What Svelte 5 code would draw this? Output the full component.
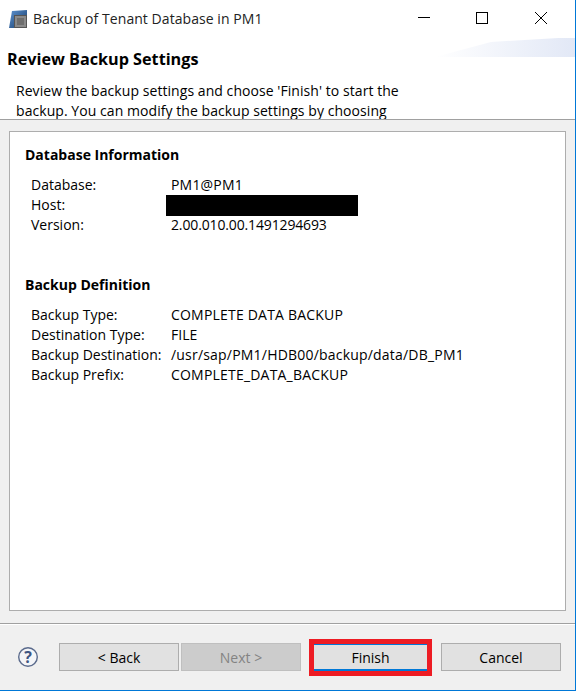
<script>
  const info = [
    { k: "Database:", v: "PM1@PM1", c: "wide" },
    { k: "Host:", v: "", c: "" },
    { k: "Version:", v: "2.00.010.00.1491294693", c: "narrow" }
  ];
  const def = [
    { k: "Backup Type:", v: "COMPLETE DATA BACKUP", c: "wide" },
    { k: "Destination Type:", v: "FILE", c: "" },
    { k: "Backup Destination:", v: "/usr/sap/PM1/HDB00/backup/data/DB_PM1", c: "wide" },
    { k: "Backup Prefix:", v: "COMPLETE_DATA_BACKUP", c: "wide" }
  ];
</script>

<div class="window">
  <header class="titlebar">
    <svg class="appicon" width="18" height="18" viewBox="0 0 18 18">
      <defs>
        <linearGradient id="ib" x1="0" y1="0" x2="1" y2="1">
          <stop offset="0" stop-color="#5f93cf" />
          <stop offset="1" stop-color="#123a6b" />
        </linearGradient>
      </defs>
      <path d="M0 18 L3 1 L18 0 L18 18 Z" fill="url(#ib)" />
      <rect x="5.5" y="5.5" width="12" height="12" fill="#8a8a8a" stroke="#555" />
      <rect x="8" y="8" width="7" height="7" fill="#6e6e6e" />
    </svg>
    <span class="title">Backup of Tenant Database in PM1</span>
    <div class="controls">
      <svg width="14" height="14" viewBox="0 0 14 14"><path d="M1 6.5H13" stroke="#000" fill="none" /></svg>
      <svg width="14" height="14" viewBox="0 0 14 14"><rect x="1.5" y="1.5" width="11" height="11" stroke="#000" fill="none" /></svg>
      <svg class="close" width="14" height="14" viewBox="0 0 14 14"><path d="M1 1L13 13M13 1L1 13" stroke="#000" fill="none" /></svg>
    </div>
  </header>

  <section class="banner">
    <div class="swoosh"></div>
    <h1>Review Backup Settings</h1>
    <p>Review the backup settings and choose 'Finish' to start the<br />backup. You can modify the backup settings by choosing</p>
  </section>

  <main class="body">
    <div class="panel">
      <h2>Database Information</h2>
      <div class="rows">
        {#each info as r}
          <div class="row"><span class="key">{r.k}</span>
            {#if r.k === "Host:"}<span class="redact"></span>{:else}<span class={r.c}>{r.v}</span>{/if}
          </div>
        {/each}
      </div>
      <h2 class="second">Backup Definition</h2>
      <div class="rows">
        {#each def as r}
          <div class="row"><span class="key">{r.k}</span><span class={r.c}>{r.v}</span></div>
        {/each}
      </div>
    </div>
  </main>

  <footer class="footer">
    <svg class="help" width="22" height="22" viewBox="0 0 22 22">
      <circle cx="11" cy="11" r="9.3" fill="#f4f5f8" stroke="#5a6a8c" stroke-width="1.4" />
      <text x="11" y="16.5" text-anchor="middle" class="q">?</text>
    </svg>
    <div class="buttons">
      <button class="btn">&lt; Back</button>
      <button class="btn disabled" disabled>Next &gt;</button>
      <div class="highlight"><button class="btn default">Finish</button></div>
      <button class="btn cancel">Cancel</button>
    </div>
  </footer>
</div>

<style>
  :global(body) { margin: 0; background: #fff; }
  .window {
    width: 576px; height: 691px; box-sizing: border-box;
    display: flex; flex-direction: column;
    font-family: "Open Sans", "Noto Sans", sans-serif;
    font-size: 14px; color: #000;
    border-right: 1px solid #0078d7; border-bottom: 1px solid #0078d7;
    overflow: hidden; background: #fff;
  }
  .titlebar { height: 38px; flex: none; display: flex; align-items: center; padding-left: 9px; }
  .appicon { flex: none; }
  .title { margin-left: 6px; margin-top: -2px; font-size: 14px; color: #222; letter-spacing: 0.06px; }
  .controls { margin-left: auto; display: flex; gap: 44px; padding-right: 27px; margin-top: -2px; }
  .close { margin-left: 1px; }
  .banner { height: 82px; flex: none; position: relative; border-bottom: 1px solid #a0a0a0; box-sizing: border-box; overflow: hidden; }
  .swoosh {
    position: absolute; right: 0; top: -1px; width: 140px; height: 20px;
    background: linear-gradient(90deg, #fff, #e2e8f6);
    clip-path: polygon(0 100%, 40% 25%, 100% 0, 100% 100%);
  }
  h1 { margin: 0; position: absolute; left: 7px; top: 10px; font-size: 16.2px; font-weight: 700; line-height: 22px; }
  p { margin: 0; position: absolute; left: 16px; top: 43px; line-height: 20px; font-size: 14px; letter-spacing: 0.06px; }
  .body { flex: 1; background: #f0f0f0; padding: 11px 9px 0 9px; min-height: 0; }
  .panel { height: 480px; box-sizing: border-box; background: #fff; border: 1px solid #adadad; padding: 13px 15px; }
  h2 { margin: 0; font-size: 14px; font-weight: 700; line-height: 20px; }
  h2.second { margin-top: 40px; }
  .rows { margin-top: 10px; padding-left: 6px; }
  .row { display: flex; height: 20px; line-height: 20px; }
  .key { width: 140px; flex: none; }
  .wide { letter-spacing: 0.2px; }
  .narrow { letter-spacing: -0.14px; }
  .redact { display: block; width: 192px; height: 21px; background: #000; margin-left: -5px; }
  .footer { height: 67px; flex: none; background: #f0f0f0; border-top: 1px solid #a0a0a0; box-shadow: inset 0 1px 0 #fff; display: flex; align-items: center; box-sizing: border-box; position: relative; }
  .help { margin-left: 17px; flex: none; }
  .q { font: 700 16px "Open Sans", sans-serif; fill: #3f5583; }
  .buttons { position: absolute; left: 59px; top: 19px; display: flex; align-items: flex-start; }
  .btn { width: 120px; height: 28px; box-sizing: border-box; border: 1px solid #adadad; background: #e1e1e1; font: inherit; color: #000; padding: 0; margin: 0; }
  .disabled { background: #cccccc; color: #838383; border-color: #bfbfbf; margin-left: 2px; }
  .highlight { border: 5px solid #ed1c24; margin: -4px 0 0 8px; box-sizing: border-box; display: flex; }
  .default { width: 113px; height: 27px; border-width: 1px 0 2px; border-color: #0078d7; }
  .cancel { margin-left: 9px; }
</style>
